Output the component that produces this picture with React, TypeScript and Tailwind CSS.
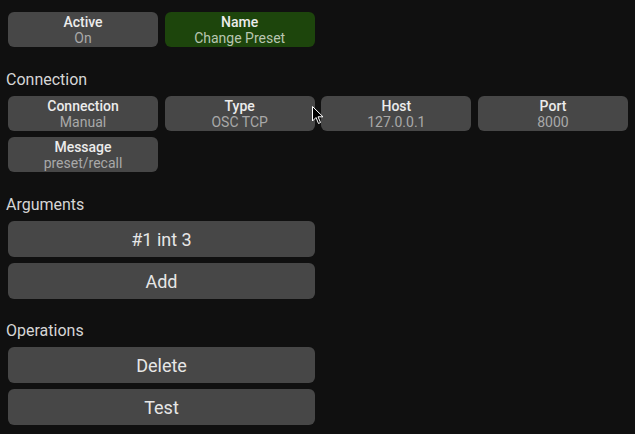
import React from "react";

const font = { fontFamily: "Roboto, 'Noto Sans', sans-serif" };

function Small({ title, value, green }: { title: string; value: string; green?: boolean }) {
  return (
    <div
      className={`h-[35px] rounded-[6px] flex flex-col items-center justify-center ${
        green ? "bg-[#1d450c]" : "bg-[#474747]"
      }`}
    >
      <div className="text-[14px] leading-[16px] font-medium text-[#ececec]">{title}</div>
      <div className={`text-[14px] leading-[16px] ${green ? "text-[#b9c6b2]" : "text-[#a9a9a9]"}`}>{value}</div>
    </div>
  );
}

function Big({ label }: { label: string }) {
  return (
    <div className="h-[36px] w-[307px] rounded-[6px] bg-[#474747] flex items-center justify-center text-[18px] text-[#e6e6e6]">
      {label}
    </div>
  );
}

function Label({ text, top }: { text: string; top: string }) {
  return (
    <div className={`${top} pb-[6px] pl-[6px] text-[16px] leading-[20px] text-[#d6d6d6]`}>
      {text}
    </div>
  );
}

export default function App() {
  return (
    <div className="relative w-[635px] h-[434px] bg-[#101010] pt-[12px] overflow-hidden" style={font}>
      <div className="px-[8px] grid grid-cols-4 gap-x-[6.67px] w-[636px]">
        <Small title="Active" value="On" />
        <Small title="Name" value="Change Preset" green />
      </div>
      <Label text="Connection" top="pt-[23px]" />
      <div className="px-[8px] grid grid-cols-4 gap-x-[6.67px] gap-y-[6px] w-[636px]">
        <Small title="Connection" value="Manual" />
        <Small title="Type" value="OSC TCP" />
        <Small title="Host" value="127.0.0.1" />
        <Small title="Port" value="8000" />
        <Small title="Message" value="preset/recall" />
      </div>
      <Label text="Arguments" top="pt-[23px]" />
      <div className="px-[8px] flex flex-col gap-[6px]">
        <Big label="#1 int 3" />
        <Big label="Add" />
      </div>
      <Label text="Operations" top="pt-[22px]" />
      <div className="px-[8px] flex flex-col gap-[6px]">
        <Big label="Delete" />
        <Big label="Test" />
      </div>
      <svg className="absolute left-[312px] top-[106px]" width="12" height="19" viewBox="0 0 12 19">
        <path d="M0.5 0.5 L0.5 15 L4 11.5 L6.5 17.5 L8.5 16.5 L6 10.8 L11 10.8 Z" fill="#000" stroke="#fff" strokeWidth="1" />
      </svg>
    </div>
  );
}
